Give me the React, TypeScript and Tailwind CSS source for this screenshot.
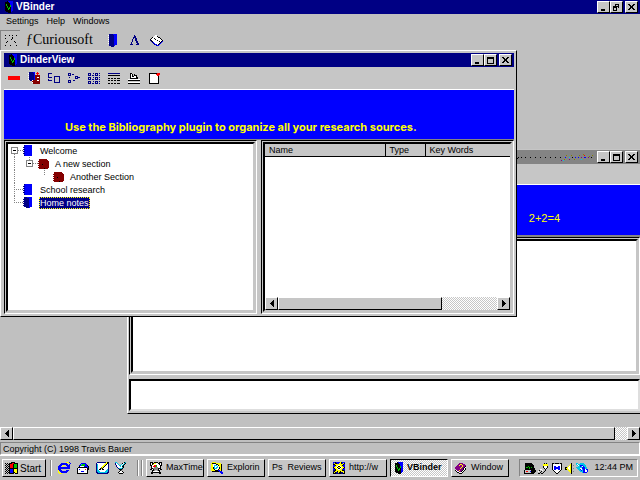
import React, { type ReactNode } from 'react';

const PALETTE: Record<string, string> = {
  k: '#000000',
  w: '#ffffff',
  n: '#000084',
  b: '#0000ff',
  r: '#ff0000',
  m: '#840000',
  g: '#848484',
  l: '#c6c6c6',
  y: '#ffff00',
  o: '#848400',
  e: '#00c000',
  c: '#00c6e7',
  p: '#840084',
};

const ICONS = {
  app: ['...kbbbbb', '.kkkkbbbb', '.kkkkkbbb', '.kekkkbbb', '.kekkkebb', '.kkekkebb', '.kkekekbb', '.kkkeekbb', '.kkkekkbb', '.kkkkkkbb', '..kkkkkb.', '....kkk..'],
  notebook: ['.nnnnbbbb', 'wnnnnnbbb', '.nnnnnbbb', 'wnnnnnbbb', '.nnnnnbbb', 'wnnnnnbbb', '.nnnnnbbb', 'wnnnnnbbb', '.nnnnnbbb', 'wnnnnnbbb', '.nnnnnbbb', '.nnnnnb..', '...nnn...'],
  letter: ['....n....', '....nn...', '...nnn...', '...n.nn..', '..n..nn..', '..n..nn..', '..n...nn.', '.n....nn.', '.n.....nn', 'nnn...nnn'],
  book: ['.....ww......', '....wwwk.....', '..kwwwwwkk...', '.kwwkwwwwwk..', 'kwwwwkwwwwwk.', 'nkwwwwwkwwwwk', '.nkwwwwwwkwkb', '..nbwwwwwwkb.', '...nbwwwwkb..', '....nbbwkb...', '......nbb....'],
  sparkle: ['k...k..k...k', '............', '.......k....', 'k......k....', '......k.....', '............', '..k......k..', '.k........k.', '............', '............', 'k....k.....k'],
  bar: ['rrrrrrrrrrrr', 'rrrrrrrrrrrr', 'rrrrrrrrrrrr', 'rrrrrrrrrrrr'],
  addBook: ['.nnnnbb..r..', 'wnnnnnb.rrr.', '.nnnnnb..r..', 'wnnnnnbmmmmm', '.nnnnnbmmmmm', 'wnnnnnbmmwwm', '.nnnnnbmmmmm', 'wnnnnnbmmmmm', '..nnwmmmmwwm', '....mmmmmmmm', '....wmmmmmmm', '.....mmmmmmm'],
  squares: ['nnnn........', 'n...........', 'n...........', 'n.....nnnnnn', 'nnnn..n....n', '......n....n', 'n.....n....n', 'nnnn..n....n', '......n....n', '......nnnnnn'],
  tree: ['nnn.........', 'n.n.nn......', 'nnn.........', '.......nnn..', '.n.....n.nnn', '.......nnn..', '............', 'nnn..nn.....', 'n.n.........', 'nnn.........'],
  list: ['nnn..n.nnn.n', 'n.n....n.n..', 'nnn.nn.nnn.n', '............', 'nnn..n.nnn.n', 'n.n....n.n..', 'nnn.nn.nnn.n', '............', 'nnn..n.nnn.n', 'n.n....n.n..', 'nnn.nn.nnn.n'],
  details: ['nnnnnnnnnnnn', '............', 'kkkkkkkkkkkk', '............', '............', 'kk.kk.kk.kkk', '............', 'kk.kk.kk.kkk', '............', '............', 'kk.kk.kk.kkk'],
  stamp: ['..kk........', '..kwk.k.....', '..kwk.kkk...', '..kwkkwwk...', '..kwwwwwkk..', '..kkkkkkkk..', 'wwwwwwwwwwww', 'kkkkkkkkkkkk', '............', 'wwwwwwwwwwww', 'kkkkkkkkkkkk'],
  page: ['kkkkkkkkrrr', 'kwwwwwwrrrr', 'kwwwwwwwrr.', 'kwwwwwwwwk.', 'kwwwwwwwwk.', 'kwwwwwwwwk.', 'kwwwwwwwwk.', 'kwwwwwwwwk.', 'kwwwwwwwwk.', 'kwwwwwwwwk.', 'kkkkkkkkkk.'],
  blueNode: ['.nbbbbbbb', 'wbbbbbbbb', 'nnbbbbbbb', 'wbbbbbbbb', 'nnbbbbbbb', 'wbbbbbbbb', 'nnbbbbbbb', 'wbbbbbbbb', 'nnbbbbbbb', 'wbbbbbbbb', '.nbbbbbbb'],
  openNode: ['.nnnbbbbb', 'wnnnnnbbb', 'nnnnnnbbb', 'wnnnnnbbb', 'nnnnnnbbb', 'wnnnnnbbb', 'nnnnnnbbb', 'wnnnnnbbb', 'nnnnnnbbb', '.nnnnnbbb', '...nnnb..'],
  redNode: ['.mmmmmmmm..', 'wmmmmmmmmm.', 'mmmmmmmmmmm', 'wmmmmmmmmmm', 'mmmmmmmmmmm', 'wmmmkmmmmmm', 'mmmmmmmmmmm', 'wmmmmmmmmmm', 'mmmmmmmmmmm', '.mmmmmkmmm.'],
  min: ['.......', '.......', '.......', '.......', '.......', '.kkkk..', '.kkkk..'],
  max: ['kkkkkkk', 'kkkkkkk', 'k.....k', 'k.....k', 'k.....k', 'k.....k', 'kkkkkkk'],
  restore: ['..kkkk.', '..k..k.', 'kkkkkk.', 'kkkk.k.', 'k..k...', 'k..k...', 'kkkk...'],
  close: ['kk...kk', '.kk.kk.', '..kkk..', '..kkk..', '.kk.kk.', 'kk...kk'],
  left: ['...k', '..kk', '.kkk', 'kkkk', '.kkk', '..kk', '...k'],
  right: ['k...', 'kk..', 'kkk.', 'kkkk', 'kkk.', 'kk..', 'k...'],
  residue: ['....................................................................o..........', '...................................................o....o.......o....r.......o..', '..........................................................................o.....', '...k..k...k....k....k....k....k....k....k....k....b...c..k..b..b..p..bb..p..k...', 'k.k.............................................................................', '.................................................o....p....o......c.............', '..............................................p.c...............................'],
  windows: ['......kkkk...', 'k.k.kkkrrkkkk', '.k.kkrrrkeeek', 'k.k.krrrkeeek', '.k.kkrrrkeeek', 'k.k.krrrkeeek', '.k.kkkkkkkkkk', 'k.k.kbbbkyyyk', '.k.kkbbbkyyyk', 'k.k.kbbbkyyyk', '.k.kkbbbkkyyk', 'k.k.kkkkk.kkk'],
  ie: ['........yyyb.', '...bbbbbb..yb', '..bbbbbbbb.b.', '.bbb.yy.bbbb.', 'bbb.y....bbb.', 'bbbbbbbbbbbb.', 'bbbbbbbbbbbb.', 'bbb..........', 'ybbb....bbb..', 'y.bbbbbbbb...', 'yy.bbbbbb....', '.yyy.........'],
  mail: ['....bbbbb....', '...bceeebb...', '..bbeeeebbk..', '..kwwwwbbbbk.', '.kkkkkkkkkbk.', 'kwwwwwwwwwkk.', 'kwbwwwwwrwkk.', 'kwwwwwwwwwk..', 'kwwwbbbwwwk..', 'kwwwwwwwwwk..', 'kkkkkkkkkkk..'],
  desktop: ['.nnnnnnnnnykk', 'nwwwwwwwwyykn', 'ncwwwwwwyykwn', 'ncwwwwwyykwwn', 'ncwwwwyykwwwn', 'ncwwwoykwwwwn', 'ncwwkokwwwwwn', 'ncwkkwkkwwwcn', 'nccwwwwwwwccn', 'ncccwwwwwcccn', 'nncccccccccnn', '.nnnnnnnnnnn.'],
  satellite: ['cc.......kc.', 'nwc....kwck.', 'nwwc..cwck..', '.nwwccwck...', '.nwwwcwkk...', '..nwwwwck...', '...nccck....', '....kkkg....', '.....kg.....', '....kwwk....', '...kwwwwk...', '....kkkk....'],
  train: ['kkk.kkkk.kkk', 'kwkkyywwkkwk', 'kwkywwwwwkwk', 'kkwwrrewwwkk', '.kwrrrewwwk.', '.kwwggggwwk.', '.kkgggggkkk.', 'kkwkggggkwkk', '..kkgllgkk..', '..kwwwwwwk..', '.kkkkkkkkkk.', '.kk......kk.'],
  explore: ['.yyyy.......', 'ykkkkyyyyy..', 'yywwwkkyyyk.', 'yywcccwkyyk.', 'yywcwwcwyyk.', 'yykcwccwkyk.', 'yykcccwwkyk.', 'yyykwwwkyyk.', 'yyyykkkbbyk.', '.kkkkkkkbbb.', '.........bbb', '..........bb'],
  web: ['bbkbbbbykbbb', 'bykkbbyykbyk', 'kkyyyyyyyykb', 'bbkyywwyykbb', 'bbyywkkwyybb', 'kyywkyykwyyk', 'bkyywkkwyykb', 'bbkyywwyybbb', 'nnkyyyyyykkn', 'nkyykyykyyyk', 'kyknnykknnyk', 'kkknnnkknnkk'],
  help: ['....pppp....', '...ppyyppp..', '..ppyppyppp.', '.ppppppyppk.', 'ppppppyppkw.', 'pppppyppkwk.', '.pppppppkwk.', 'kwppyppkwk..', '.kwwppkwk...', '..kkwwwk....', '....kkk.....'],
  monitor: ['.kkkkkkk....', '.kkkkkkkk...', '.kkkkkkkkk..', '.kkkekkkkk..', '.keekekekk..', '.kkkkekkkkk.', '.kkkkkkkkkk.', 'kllllllkkkkk', 'klrrllbkkkkk', 'kllllllkkkk.', 'kkkkkkkkkk..'],
  plug: ['......k.k...', '.....yyyyy..', '.....yyyyy..', '.....kwwwk..', '.....kwwwk..', '......kwk...', '..ww...k....', '.k..w..k....', 'w..k..k.....', '..k..k......', 'kk.kk.......'],
  shield: ['kkgkkkkgkk.', 'kwwwwwwwwk.', 'kwwwwwwwwk.', 'kwbbwwbbwk.', 'kwbbbbbbwk.', 'kwbbbbbbwk.', 'kwbbwwbbwk.', '.kwwwwwwk..', '..kwwwwk...', '...kwwk....', '....kk.....'],
  speaker: ['......k..', '.....yk..', '....yyk.g', '...ywyk..', 'kkywwyk..', 'kyywwyk.g', 'kkyywyk..', '...yyyk..', '....yyk.g', '.....yk..', '......k..'],
  globe: ['cc..cccc....', 'cwccccccc...', '.cwcbbbccc..', '..ccbcwbcc..', 'ccccccbbbcc.', '.cccwwbbbcc.', '..ccbwcbbwbb', '...ccbcbbwwb', '....cccbbwwb', '......cbbbb.'],
};

type IconName = keyof typeof ICONS;

function PixelIcon({ name }: { name: IconName }) {
  const rows = ICONS[name];
  const width = Math.max(...rows.map((row) => row.length));
  return (
    <svg
      width={width}
      height={rows.length}
      viewBox={`0 0 ${width} ${rows.length}`}
      shapeRendering="crispEdges"
      className="shrink-0"
      aria-hidden="true"
    >
      {rows.flatMap((row, y) =>
        row.split('').map((c, x) =>
          PALETTE[c] ? <rect key={`${x}-${y}`} x={x} y={y} width="1" height="1" fill={PALETTE[c]} /> : null,
        ),
      )}
    </svg>
  );
}

const RAISED = 'border border-t-white border-l-white border-r-black border-b-black bg-[#c6c6c6]';
const SUNKEN = 'border border-t-[#848484] border-l-[#848484] border-r-white border-b-white';
const CHECKER = 'bg-[repeating-conic-gradient(#ffffff_0_25%,#c6c6c6_0_50%)] bg-size-[2px_2px]';

function Well({ className = '', children }: { className?: string; children: ReactNode }) {
  return (
    <div className={`flex min-h-0 flex-col border border-t-black border-l-black border-r-white border-b-white bg-[#c6c6c6] p-px ${className}`}>
      <div className="flex min-h-0 flex-1 flex-col border-2 border-t-black border-r-[#c6c6c6] border-b-[#c6c6c6] border-l-black bg-white">
        {children}
      </div>
    </div>
  );
}

function CaptionButton({ icon, label }: { icon: IconName; label: string }) {
  return (
    <button aria-label={label} className={`flex h-3 w-[13px] items-center justify-center ${RAISED}`}>
      <PixelIcon name={icon} />
    </button>
  );
}

function TitleBar({ title, active = true, restore = false }: { title?: string; active?: boolean; restore?: boolean }) {
  return (
    <div className={`flex h-[14px] shrink-0 items-center gap-[2px] pr-[2px] pl-1 ${active ? 'bg-[#000084]' : 'bg-[#848484]'}`}>
      {title && <PixelIcon name="app" />}
      <span className="flex flex-1 justify-end text-[10px] leading-3 font-bold text-white">
        {title ? <span className="flex-1 pl-px">{title}</span> : <PixelIcon name="residue" />}
      </span>
      <span className="flex">
        <CaptionButton icon="min" label="Minimize" />
        <CaptionButton icon={restore ? 'restore' : 'max'} label={restore ? 'Restore' : 'Maximize'} />
      </span>
      <CaptionButton icon="close" label="Close" />
    </div>
  );
}

function ToolButton({ icon, label }: { icon: IconName; label: string }) {
  return (
    <button aria-label={label} className="flex h-5 w-5 items-center justify-center">
      <PixelIcon name={icon} />
    </button>
  );
}

interface TreeNode {
  label: string;
  icon: IconName;
  depth: number;
  box?: boolean;
  selected?: boolean;
  lines: string[];
}

// each line is a dotted connector inside the 13px high gutter
const NODES: TreeNode[] = [
  { label: 'Welcome', icon: 'blueNode', depth: 0, box: true, lines: ['M10 6.5H15', 'M6.5 10V13'] },
  { label: 'A new section', icon: 'redNode', depth: 1, box: true, lines: ['M6.5 0V13', 'M21.5 0V3', 'M25 6.5H31'] },
  { label: 'Another Section', icon: 'redNode', depth: 2, lines: ['M6.5 0V13', 'M36.5 0V6'] },
  { label: 'School research', icon: 'blueNode', depth: 0, lines: ['M6.5 0V13', 'M6 6.5H15'] },
  { label: 'Home notes', icon: 'openNode', depth: 0, selected: true, lines: ['M6.5 0V6', 'M6 6.5H15'] },
];

function TreeGutter({ node }: { node: TreeNode }) {
  const width = 15 + node.depth * 15;
  const boxX = 3.5 + node.depth * 15;
  return (
    <svg width={width} height="13" viewBox={`0 0 ${width} 13`} shapeRendering="crispEdges" className="shrink-0" aria-hidden="true">
      {node.lines.map((d) => (
        <path key={d} d={d} stroke="#848484" strokeDasharray="1 1" />
      ))}
      {node.box && (
        <>
          <rect x={boxX} y="3.5" width="6" height="6" fill="#ffffff" stroke="#848484" />
          <path d={`M${boxX + 1.5} 6.5h3`} stroke="#000000" />
        </>
      )}
    </svg>
  );
}

function HScroll({ thumb }: { thumb: ReactNode }) {
  return (
    <div className={`flex h-[13px] shrink-0 ${CHECKER}`}>
      <button aria-label="Scroll left" className={`flex w-[13px] items-center justify-center ${RAISED}`}>
        <PixelIcon name="left" />
      </button>
      <div className="flex flex-1">{thumb}</div>
      <button aria-label="Scroll right" className={`flex w-[13px] items-center justify-center ${RAISED}`}>
        <PixelIcon name="right" />
      </button>
    </div>
  );
}

function NotesWindow() {
  return (
    <section className="absolute top-[99px] right-0 left-[127px] flex h-[265px] flex-col border-b border-l border-b-black border-l-white bg-[#c6c6c6] pt-px pl-px">
      <TitleBar active={false} />
      <div className="mt-5 flex h-[53px] shrink-0 items-center justify-end border-t border-b-2 border-t-white border-b-[#848484] bg-[#0000ff] pt-4 pr-20 text-[11px] text-[#ffff00]">
        2+2=4
      </div>
      <Well className="flex-1">
        <textarea aria-label="Notes" className="block min-h-0 flex-1 resize-none" />
      </Well>
      <input
        aria-label="Entry"
        className="mt-1 mb-[2px] h-8 shrink-0 border-2 border-t-black border-r-[#dedede] border-b-[#dedede] border-l-black bg-white"
      />
    </section>
  );
}

function BinderWindow() {
  return (
    <section className="absolute top-0 left-0 flex h-[267px] w-[517px] flex-col border border-t-white border-r-black border-b-black border-l-white bg-[#c6c6c6] p-[2px] pl-[3px]">
      <TitleBar title="DinderView" />
      <div className="flex h-[22px] shrink-0 items-center">
        <ToolButton icon="bar" label="Remove" />
        <ToolButton icon="addBook" label="Add section" />
        <ToolButton icon="squares" label="Large icons" />
        <ToolButton icon="tree" label="Small icons" />
        <ToolButton icon="list" label="List" />
        <ToolButton icon="details" label="Details" />
        <ToolButton icon="stamp" label="Stamp" />
        <ToolButton icon="page" label="New page" />
      </div>
      <div className="flex h-[51px] shrink-0 items-end border-t border-b border-t-white border-b-[#848484] bg-[#0000ff] pb-1 pl-[61px] font-[Inter,sans-serif] text-[11px] font-bold whitespace-nowrap text-[#ffff00]">
        Use the Bibliography plugin to organize all your research sources.
      </div>
      <div className="flex min-h-0 flex-1 gap-1">
        <Well className="flex-1">
          <ul>
            {NODES.map((node) => (
              <li key={node.label} className="flex h-[13px] items-center">
                <TreeGutter node={node} />
                <span className="flex w-4 shrink-0">
                  <PixelIcon name={node.icon} />
                </span>
                <span
                  className={`px-px text-[9px] leading-3 ${
                    node.selected ? 'bg-[#000084] text-white outline-1 -outline-offset-1 outline-dotted outline-[#ffff00]' : ''
                  }`}
                >
                  {node.label}
                </span>
              </li>
            ))}
          </ul>
        </Well>
        <Well className="flex-1">
          <table className="w-full table-fixed border-collapse bg-[#c6c6c6] text-left text-[9px] leading-3">
            <thead>
              <tr className="border-b border-black">
                <th className="w-[120px] border-r border-black px-1 font-normal">Name</th>
                <th className="w-10 border-r border-black px-1 font-normal">Type</th>
                <th className="px-1 font-normal">Key Words</th>
              </tr>
            </thead>
          </table>
          <div className="flex-1" />
          <HScroll thumb={<div className={`w-3/4 ${RAISED}`} />} />
        </Well>
      </div>
    </section>
  );
}

interface Task {
  label: string;
  icon?: IconName;
  active?: boolean;
}

const TASKS: Task[] = [
  { label: 'MaxTime', icon: 'train' },
  { label: 'Explorin', icon: 'explore' },
  { label: 'Ps  Reviews' },
  { label: 'http://w', icon: 'web' },
  { label: 'VBinder', icon: 'app', active: true },
  { label: 'Window', icon: 'help' },
];

const QUICK: { icon: IconName; label: string }[] = [
  { icon: 'ie', label: 'Internet Explorer' },
  { icon: 'mail', label: 'Mail' },
  { icon: 'desktop', label: 'Show desktop' },
  { icon: 'satellite', label: 'Channels' },
];

const TRAY: IconName[] = ['monitor', 'plug', 'shield', 'speaker', 'globe'];

function Divider() {
  return <span className="h-4 w-[2px] shrink-0 border-l border-[#848484] bg-white" />;
}

function Taskbar() {
  return (
    <footer className="flex h-[25px] shrink-0 items-center border-t border-white px-[2px] text-[10px]">
      <button className={`flex h-[18px] w-11 shrink-0 items-center gap-[2px] px-[2px] ${RAISED}`}>
        <PixelIcon name="windows" />
        Start
      </button>
      <div className="ml-1 flex items-center">
        <Divider />
        <div className="flex gap-[6px] px-[6px]">
          {QUICK.map((item) => (
            <button key={item.icon} aria-label={item.label}>
              <PixelIcon name={item.icon} />
            </button>
          ))}
        </div>
      </div>
      <div className="ml-1 flex min-w-0 flex-1 items-center gap-[3px]">
        <span className="flex gap-[2px]">
          <Divider />
          <Divider />
        </span>
        {TASKS.map((task) => (
          <button
            key={task.label}
            className={`flex h-[18px] w-[58px] items-center gap-1 overflow-hidden px-[3px] text-[9px] whitespace-pre ${
              task.active ? `font-bold border border-t-black border-l-black border-r-white border-b-white ${CHECKER}` : RAISED
            }`}
          >
            {task.icon && <PixelIcon name={task.icon} />}
            {task.label}
          </button>
        ))}
      </div>
      <div className={`flex h-[18px] shrink-0 items-center gap-[2px] px-1 ${SUNKEN}`}>
        {TRAY.map((icon) => (
          <PixelIcon key={icon} name={icon} />
        ))}
        <time className="ml-1 text-[9px]">12:44 PM</time>
      </div>
    </footer>
  );
}

export default function App() {
  return (
    <div className="flex min-h-screen flex-col overflow-hidden bg-[#c0c0c0] font-['Liberation_Sans',sans-serif] text-black">
      <TitleBar title="VBinder" restore />
      <nav className="flex h-4 shrink-0 items-center gap-2 px-[6px] text-[9px]">
        <button>Settings</button>
        <button>Help</button>
        <button>Windows</button>
      </nav>
      <div className="flex h-5 shrink-0 items-center gap-[2px]">
        <div className="flex h-5 w-5 items-center justify-center border-t border-l border-[#848484]">
          <PixelIcon name="sparkle" />
        </div>
        <span className="ml-1 w-[74px] font-['Liberation_Serif',serif] text-[14px] leading-5">ƒCuriousoft</span>
        <ToolButton icon="notebook" label="Binder" />
        <ToolButton icon="letter" label="Font" />
        <ToolButton icon="book" label="Help" />
      </div>
      <main className="relative min-h-[377px] flex-1 overflow-hidden">
        <NotesWindow />
        <BinderWindow />
      </main>
      <HScroll thumb={<div className={`mr-3 flex-1 ${RAISED}`} />} />
      <div className={`mt-[2px] h-[13px] shrink-0 px-[2px] text-[9px] leading-3 ${SUNKEN}`}>
        Copyright (C) 1998 Travis Bauer
      </div>
      <Taskbar />
    </div>
  );
}
